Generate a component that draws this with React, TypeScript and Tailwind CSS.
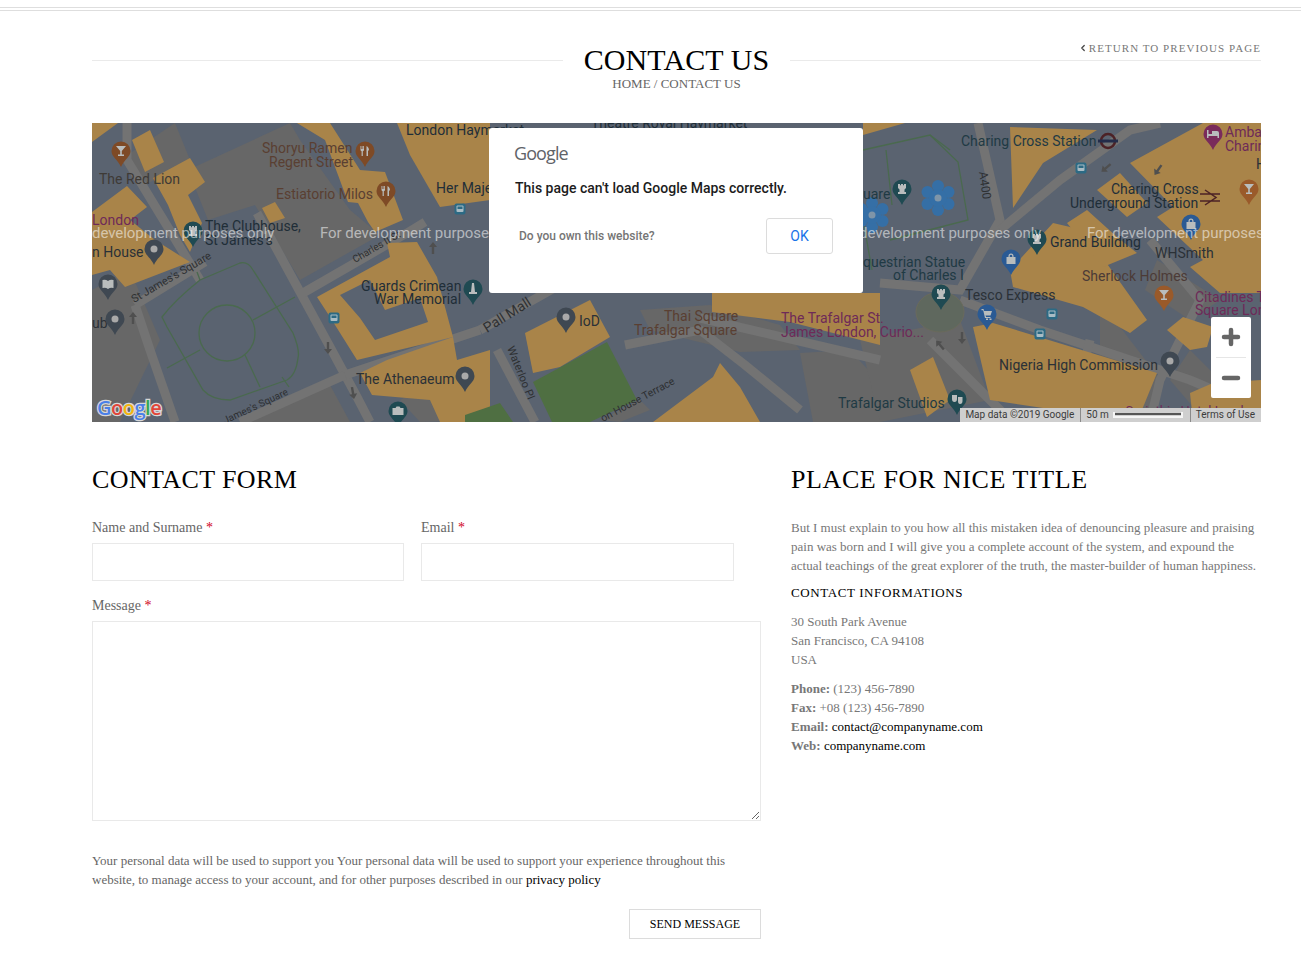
import { ChevronLeft, Plus, Minus } from "lucide-react";

const ORANGE = [
  "92,123 118,123 92,142",
  "132,140 150,130 164,162 145,172",
  "153,178 190,158 205,182 188,195 202,223 190,252 180,235 168,205",
  "92,212 127,186 147,207 130,220 155,240 190,262 125,287 110,270 92,275",
  "262,208 275,202 285,218 270,223",
  "297,123 330,123 360,170 385,172 403,220 375,232 368,222 358,203 348,202 325,140",
  "397,123 490,123 490,200 440,207 410,155",
  "317,297 390,257 387,243 417,242 437,277 453,337 357,360 330,317",
  "360,373 387,360 453,337 457,360 490,350 490,422 440,422 430,400 372,395",
  "525,333 590,300 610,337 560,367 533,373",
  "653,422 713,377 720,363 740,387 760,422",
  "712,293 880,293 880,345 790,322 712,312",
  "863,123 905,123 863,135",
  "1010,270 1053,223 1083,230 1147,320 1130,333 1083,307 1013,287",
  "1010,127 1097,130 1043,163 1013,208",
  "1130,163 1203,123 1261,123 1261,293 1220,293 1190,267 1203,260 1157,217 1173,207",
  "1067,223 1087,210 1117,237 1137,253 1103,267",
  "1097,190 1120,173 1147,203 1127,217",
  "973,327 993,323 1157,373 1137,422 990,400",
  "910,370 933,357 950,400 927,417",
  "1167,330 1183,317 1213,327 1207,347 1190,350",
  "1190,393 1213,383 1261,380 1261,422 1193,422",
];

const GRAY = [
  "92,290 130,270 160,340 120,422 92,422",
  "188,170 290,123 300,140 350,210 380,235 300,280 255,205 208,220",
  "120,160 175,123 190,160 145,185",
  "400,400 450,372 490,420 420,422",
  "240,422 330,385 350,422",
  "600,420 640,400 650,410 620,422",
  "640,310 710,305 780,325 800,350 740,352 650,330",
  "800,353 850,350 880,383 880,422 813,422",
  "860,340 960,320 990,400 880,422",
  "1100,300 1130,340 1161,380 1150,422 1100,420",
  "1157,260 1220,300 1190,320 1145,290",
  "1190,350 1250,410 1200,415 1170,380",
];

const ROADS = [
  "127,123 127,160 200,280",
  "257,213 330,347 357,397 370,422",
  "135,305 205,262",
  "135,305 150,350 175,422",
  "303,293 407,233 425,222",
  "480,330 563,283 640,270 720,268",
  "345,375 480,330",
  "240,422 345,375",
  "497,350 535,422",
  "625,345 700,330 745,365 800,410",
  "978,123 1000,220 960,290 880,283",
  "1000,230 1060,180 1130,130 1160,123",
  "960,300 1040,330 1190,380 1261,410",
  "1150,240 1200,300 1160,380 1150,422",
  "700,318 880,360",
  "930,340 1005,415",
  "1090,340 1070,422",
];

const LABELS: [number, number, string, string][] = [
  [99, 184, "The Red Lion", "#3e3a36"],
  [262, 153, "Shoryu Ramen", "#5a3f32"],
  [269, 167, "Regent Street", "#5a3f32"],
  [276, 199, "Estiatorio Milos", "#5a3f32"],
  [406, 135, "London Haymarket", "#1f2e38"],
  [591, 128, "Theatre Royal Haymarket", "#1f2e38"],
  [436, 193, "Her Majesty's", "#1f2e38"],
  [92, 225, "London", "#6e2a58"],
  [205, 231, "The Clubhouse,", "#1f2e38"],
  [205, 245, "St James's", "#1f2e38"],
  [92, 257, "n House", "#2b3137"],
  [92, 328, "ub", "#2b3137"],
  [361, 291, "Guards Crimean", "#1f2e38"],
  [374, 304, "War Memorial", "#1f2e38"],
  [356, 384, "The Athenaeum", "#2b3137"],
  [579, 326, "IoD", "#2b3137"],
  [664, 321, "Thai Square", "#5a3f32"],
  [634, 335, "Trafalgar Square", "#5a3f32"],
  [781, 323, "The Trafalgar St.", "#6e2a58"],
  [781, 337, "James London, Curio...", "#6e2a58"],
  [961, 146, "Charing Cross Station", "#1f3a44"],
  [1111, 194, "Charing Cross", "#1f2e38"],
  [1070, 208, "Underground Station", "#1f2e38"],
  [1050, 247, "Grand Building", "#1f2e38"],
  [1155, 258, "WHSmith", "#2b3137"],
  [1082, 281, "Sherlock Holmes", "#4c3b37"],
  [1195, 302, "Citadines T", "#6e2a58"],
  [1195, 315, "Square Lon", "#6e2a58"],
  [1225, 137, "Amba", "#6e2a58"],
  [1225, 151, "Charing", "#6e2a58"],
  [863, 267, "questrian Statue", "#1f3a44"],
  [893, 280, "of Charles I", "#1f3a44"],
  [965, 300, "Tesco Express", "#2b3137"],
  [999, 370, "Nigeria High Commission", "#2b3137"],
  [838, 408, "Trafalgar Studios", "#1f3a44"],
  [863, 199, "uare", "#1f3a44"],
];

const ROAD_LABELS: [number, number, number, string, number][] = [
  [134, 303, -30, "St James's Square", 11],
  [225, 424, -25, "James's Square", 10],
  [355, 263, -30, "Charles II St", 10],
  [487, 333, -32, "Pall Mall", 14],
  [507, 348, 68, "Waterloo Pl", 11],
  [603, 422, -28, "on House Terrace", 10.5],
  [979, 172, 82, "A400", 12],
];

// pin glyphs, drawn around the centre of the pin head
const GLYPHS: Record<string, string> = {
  cocktail: "M-5 -5 H5 L0.8 0 V3.5 H3 V5 H-3 V3.5 H-0.8 V0 Z",
  food: "M-4.5 -5 H-3.8 V-2 H-3.2 V-5 H-2.5 V-2 H-1.8 V-5 H-1 V-1 Q-1 0 -2.2 0.3 V5 H-3.4 V0.3 Q-4.5 0 -4.5 -1 Z M1.5 -5 Q4 -4 4 -0.5 H3 V5 H1.5 Z",
  rook: "M-4 -5 H-2 V-3.8 H-1 V-5 H1 V-3.8 H2 V-5 H4 V-1 L2.5 0.5 V3 H4 V5 H-4 V3 H-2.5 V0.5 L-4 -1 Z",
  obelisk: "M-1 -6 H1 L2 3 H4 V5 H-4 V3 H-2 Z",
  bag: "M-4.5 -2 H-2.5 V-3 A2.5 2.5 0 0 1 2.5 -3 V-2 H4.5 V5 H-4.5 Z M-1.3 -2 H1.3 V-3 A1.3 1.3 0 0 0 -1.3 -3 Z",
  cart: "M-5.5 -5 H-3.5 L-2.8 -3 H5 L3.5 1.5 H-1.5 L-0.9 3 H3.5 V4 H-2 L-3.8 -3.8 H-5.5 Z M-1 4.5 H1 V6 H-1 Z M2.5 4.5 H4.5 V6 H2.5 Z",
  book: "M-5.5 -4 Q-2.5 -5 0 -3 Q2.5 -5 5.5 -4 V4 Q2.5 3 0 5 Q-2.5 3 -5.5 4 Z",
  camera: "M-5.5 -3 H-2.5 L-1.5 -4.5 H1.5 L2.5 -3 H5.5 V4 H-5.5 Z",
  bed: "M-6 -4 H-4.5 V0 H-1 V-3 H4 Q6 -3 6 -1 V4 H4.5 V2 H-4.5 V4 H-6 Z",
  masks: "M-5 -4 H0 V0 Q0 3 -2.5 3 Q-5 3 -5 0 Z M1 -2 H5.5 V2 Q5.5 5 3 5 Q1 5 1 2 Z",
};

const PINS: [number, number, string, string][] = [
  [121, 152, "#7e4a26", "cocktail"],
  [365, 152, "#7e4a26", "food"],
  [386, 192, "#7e4a26", "food"],
  [193, 232, "#1f4a52", "rook"],
  [154, 250, "#3f4852", "dot"],
  [108, 285, "#3f4852", "book"],
  [115, 320, "#3f4852", "dot"],
  [473, 290, "#1f4a52", "obelisk"],
  [465, 377, "#3f4852", "dot"],
  [398, 412, "#1f4a52", "camera"],
  [566, 318, "#3f4852", "dot"],
  [902, 190, "#1f4a52", "rook"],
  [1037, 240, "#1f4a52", "rook"],
  [1011, 260, "#2a5a94", "bag"],
  [941, 295, "#1f4a52", "rook"],
  [987, 315, "#2a5a94", "cart"],
  [1170, 362, "#3f4852", "dot"],
  [957, 400, "#1f4a52", "masks"],
  [1164, 296, "#9a5a2a", "cocktail"],
  [1249, 190, "#9a5a2a", "cocktail"],
  [1191, 225, "#2a5a94", "bag"],
  [1213, 135, "#7a2b5b", "bed"],
];

const TRANSIT = [
  [460, 209],
  [334, 318],
  [1081, 168],
  [1052, 314],
  [1040, 334],
];

// one-way arrows: x, y, rotation
const ARROWS = [
  [133, 318, 0],
  [328, 348, 180],
  [353, 393, 170],
  [433, 248, 0],
  [1106, 168, 230],
  [1158, 170, 215],
  [940, 345, 320],
  [962, 338, 180],
];

const WATERMARKS: [number, string][] = [
  [92, "development purposes only"],
  [320, "For development purposes only"],
  [859, "development purposes only"],
  [1087, "For development purposes only"],
];

function Flower({ x, y }: { x: number; y: number }) {
  return (
    <g fill="#356fa6">
      <circle cx={x} cy={y - 12} r="6" />
      <circle cx={x + 10.5} cy={y - 6} r="6" />
      <circle cx={x + 10.5} cy={y + 6} r="6" />
      <circle cx={x} cy={y + 12} r="6" />
      <circle cx={x - 10.5} cy={y + 6} r="6" />
      <circle cx={x - 10.5} cy={y - 6} r="6" />
      <circle cx={x} cy={y} r="9" />
      <circle cx={x} cy={y} r="3.5" fill="#7f95a8" />
    </g>
  );
}

function MapDrawing() {
  return (
    <svg viewBox="92 123 1169 299" className="block w-full h-full" fontFamily="Roboto, sans-serif">
      <rect x="92" y="123" width="1169" height="299" fill="#5a6370" />
      {GRAY.map((p) => (
        <polygon key={p} points={p} fill="#676767" />
      ))}
      {ROADS.map((p) => (
        <polyline key={p} points={p} fill="none" stroke="#737373" strokeWidth="9" />
      ))}
      {ORANGE.map((p) => (
        <polygon key={p} points={p} fill="#a98449" />
      ))}
      <polygon points="340,295 370,280 385,310 420,298 428,322 375,340 360,318" fill="#5a6370" />
      <polygon points="533,382 607,342 637,400 590,422 552,422" fill="#4f6f42" />
      <polygon points="465,415 500,403 513,422 465,422" fill="#4f6f42" />

      {/* St James's Square garden */}
      <g fill="none" stroke="#4a6a4e" strokeWidth="1.3">
        <path d="M162 317 Q175 300 200 280 L240 263 Q248 261 253 270 L293 333 Q300 350 298 358 Q296 375 287 380 L230 400 Q212 400 203 390 L167 327 Z" />
        <circle cx="227" cy="333" r="28" />
        <path d="M167 368 L200 350 M253 320 L295 297 M245 355 L260 387 M197 272 L200 280 M282 377 L289 387" />
        <path d="M863 150 L930 135 L958 162 L968 220 L890 240 M886 150 L892 205 M864 225 L872 270" />
        <path d="M930 135 L950 150" />
      </g>
      <ellipse cx="940" cy="312" rx="24" ry="20" fill="#5f685e" stroke="#6a6a5c" />

      <Flower x={938} y={198} />
      <Flower x={872} y={215} />

      {ARROWS.map(([x, y, r]) => (
        <path
          key={x}
          d="M0 -6 L4 -1 H1.2 V6 H-1.2 V-1 H-4 Z"
          fill="#4f4f4f"
          transform={`translate(${x} ${y}) rotate(${r})`}
        />
      ))}

      {TRANSIT.map(([x, y]) => (
        <g key={x}>
          <rect x={x - 5.5} y={y - 5.5} width="11" height="11" rx="2" fill="#2c6a84" />
          <rect x={x - 3.5} y={y - 3.5} width="7" height="6.5" rx="1" fill="#a9bcc4" />
          <rect x={x - 2.5} y={y - 2.5} width="5" height="2.5" fill="#2c6a84" />
        </g>
      ))}

      {ROAD_LABELS.map(([x, y, r, t, s]) => (
        <text key={t} x={x} y={y} fontSize={s} fill="#2e3032" transform={`rotate(${r} ${x} ${y})`}>
          {t}
        </text>
      ))}
      {LABELS.map(([x, y, t, c]) => (
        <text key={t + x} x={x} y={y} fontSize="14" fill={c}>
          {t}
        </text>
      ))}
      <text x="1256" y="169" fontSize="14" fill="#2b3137">
        H
      </text>
      <text x="1009" y="422" fontSize="10" fill="#5a5048">
        Craig's Ct
      </text>
      <text x="1125" y="415" fontSize="13" fill="#6e2a58">
        Corinthia Hotel London
      </text>

      {PINS.map(([x, y, c, kind]) => (
        <g key={x}>
          <path
            d={`M${x - 9.5} ${y - 1} a9.5 9.5 0 1 1 19 0 c0 6 -6 8 -9.5 16 c-3.5 -8 -9.5 -10 -9.5 -16 z`}
            fill={c}
          />
          {kind === "dot" ? (
            <circle cx={x} cy={y - 1} r="3.5" fill="#a9a9a9" />
          ) : (
            <path d={GLYPHS[kind]} fill="#b9bdbd" fillRule="evenodd" transform={`translate(${x} ${y - 1})`} />
          )}
        </g>
      ))}

      {/* Underground and rail marks */}
      <circle cx="1108" cy="141" r="7" fill="none" stroke="#4c2226" strokeWidth="2.5" />
      <rect x="1098" y="139.5" width="20" height="3" fill="#232c4a" />
      <path d="M1200 194 H1220 M1200 201 H1220 M1205 190 L1216 197.5 L1205 205" fill="none" stroke="#4c2226" strokeWidth="1.5" />

      {WATERMARKS.map(([x, t]) => (
        <text key={x} x={x} y="238" fontSize="15" letterSpacing="-0.05" fill="#ffffff" fillOpacity="0.55">
          {t}
        </text>
      ))}

      {/* Google wordmark */}
      <text x="97" y="415" fontSize="20" fontFamily="'Open Sans', sans-serif" fontWeight="600" stroke="#d8d8d8" strokeWidth="2.5" paintOrder="stroke" letterSpacing="-0.5">
        <tspan fill="#4a80e8">G</tspan>
        <tspan fill="#e0463a">o</tspan>
        <tspan fill="#f2b50f">o</tspan>
        <tspan fill="#4a80e8">g</tspan>
        <tspan fill="#34a853">l</tspan>
        <tspan fill="#e0463a">e</tspan>
      </text>
    </svg>
  );
}

function Field({ label, className }: { label: string; className: string }) {
  return (
    <div className={className}>
      <label className="block text-[14px] leading-[19px] text-[#666] mb-[6px]">
        {label} <span className="text-[#d0021b]">*</span>
      </label>
      <input type="text" className="block w-full h-[38px] border border-[#e9e9e9] bg-white" />
    </div>
  );
}

export default function App() {
  return (
    <div className="min-h-[964px] bg-white font-['Liberation_Serif',serif] text-[#777]">
      <div className="pt-[7px]">
        <div className="h-px bg-[#dedede]" />
        <div className="h-px mt-[2px] bg-[#dedede]" />
      </div>

      <div className="ml-[92px] mr-[40px]">
        {/* Page title */}
        <div className="relative pt-[34px]">
          <div className="flex items-center">
            <div className="flex-1 h-px bg-[#eaeaea]" />
            <h1 className="mx-[21px] text-[30px] leading-[30px] tracking-[0.1px] text-black whitespace-nowrap">
              CONTACT US
            </h1>
            <div className="flex-1 h-px bg-[#eaeaea]" />
          </div>
          <a className="absolute right-0 top-[30px] flex items-center text-[11px] leading-[14px] tracking-[1.05px] text-[#777]">
            <ChevronLeft className="w-[10px] h-[10px] mr-[1px] text-[#444]" strokeWidth={3} />
            RETURN TO PREVIOUS PAGE
          </a>
          <p className="text-center text-[13px] leading-[18px] text-[#666]">HOME / CONTACT US</p>
        </div>

        {/* Map */}
        <div className="relative mt-[30px] h-[299px] overflow-hidden">
          <MapDrawing />

          <div className="absolute left-[397px] top-[5px] w-[374px] h-[165px] bg-white rounded-[3px] font-['Roboto',sans-serif]">
            <div className="pl-[25px] pt-[13px] text-[18px] leading-[24px] tracking-[-0.9px] text-[#5f6368] font-['Open_Sans',sans-serif]">
              Google
            </div>
            <p className="pl-[26px] pt-[13px] text-[14px] leading-[20px] font-medium text-[#1c1c1c]">
              This page can't load Google Maps correctly.
            </p>
            <div className="flex items-center justify-between pl-[30px] pr-[30px] pt-[20px]">
              <span className="text-[12px] font-medium text-[#757575]">Do you own this website?</span>
              <button className="w-[67px] h-[36px] border border-[#dcdcdc] rounded-[3px] text-[14px] text-[#1a73e8]">
                OK
              </button>
            </div>
          </div>

          <div className="absolute right-[10px] top-[194px] w-[40px] h-[81px] bg-white rounded-[2px] flex flex-col items-center">
            <div className="h-[40px] flex items-center justify-center">
              <Plus className="w-[24px] h-[24px] text-[#666]" strokeWidth={4.5} absoluteStrokeWidth />
            </div>
            <div className="w-[30px] h-px bg-[#e6e6e6]" />
            <div className="h-[40px] flex items-center justify-center">
              <Minus className="w-[24px] h-[24px] text-[#666]" strokeWidth={4.5} absoluteStrokeWidth />
            </div>
          </div>

          <div className="absolute right-0 bottom-0 h-[14px] flex items-center bg-[#cfcfcf] font-['Roboto',sans-serif] text-[10px] leading-[14px] text-[#3c3c3c] whitespace-nowrap">
            <span className="pl-[5px] pr-[6px]">Map data ©2019 Google</span>
            <span className="w-px h-full bg-[#8a8a8a]" />
            <span className="pl-[5px] pr-[3px]">50 m</span>
            <span className="w-[70px] h-[6px] ml-[1px] mr-[7px] border-x-2 border-b-2 border-[#f5f5f5] relative">
              <span className="absolute left-0 right-0 top-[1px] h-[2px] bg-[#555]" />
            </span>
            <span className="w-px h-full bg-[#8a8a8a]" />
            <span className="pl-[5px] pr-[6px]">Terms of Use</span>
          </div>
        </div>

        <div className="flex gap-[30px] mt-[43px]">
          {/* Contact form */}
          <div className="w-[669px]">
            <h2 className="text-[26px] leading-[30px] tracking-[0.4px] text-black">CONTACT FORM</h2>
            <div className="flex mt-[23px]">
              <Field label="Name and Surname" className="w-[312px]" />
              <Field label="Email" className="w-[313px] ml-[17px]" />
            </div>
            <label className="block mt-[15px] mb-[6px] text-[14px] leading-[19px] text-[#666]">
              Message <span className="text-[#d0021b]">*</span>
            </label>
            <textarea className="block w-full h-[200px] border border-[#e9e9e9] bg-white" />
            <p className="mt-[30px] text-[13px] leading-[19px] text-[#666]">
              Your personal data will be used to support you Your personal data will be used to support your experience throughout this website, to manage access to your account, and for other purposes described in our{" "}
              <a className="text-black">privacy policy</a>
            </p>
            <div className="flex justify-end mt-[20px]">
              <button className="w-[132px] h-[30px] border border-[#dcdcdc] text-[12px] text-black">SEND MESSAGE</button>
            </div>
          </div>

          {/* Contact info */}
          <div className="flex-1 min-w-0">
            <h2 className="text-[26px] leading-[30px] tracking-[0.6px] text-black">PLACE FOR NICE TITLE</h2>
            <p className="mt-[23px] text-[13px] leading-[19px]">
              But I must explain to you how all this mistaken idea of denouncing pleasure and praising pain was born and I will give you a complete account of the system, and expound the actual teachings of the great explorer of the truth, the master-builder of human happiness.
            </p>
            <h3 className="mt-[8px] text-[13px] leading-[19px] tracking-[0.6px] text-black">CONTACT INFORMATIONS</h3>
            <p className="mt-[10px] text-[13px] leading-[19px]">
              30 South Park Avenue
              <br />
              San Francisco, CA 94108
              <br />
              USA
            </p>
            <p className="mt-[10px] text-[13px] leading-[19px]">
              <b>Phone:</b> (123) 456-7890
              <br />
              <b>Fax:</b> +08 (123) 456-7890
              <br />
              <b>Email:</b> <a className="text-black">contact@companyname.com</a>
              <br />
              <b>Web:</b> <a className="text-black">companyname.com</a>
            </p>
          </div>
        </div>
      </div>
    </div>
  );
}
